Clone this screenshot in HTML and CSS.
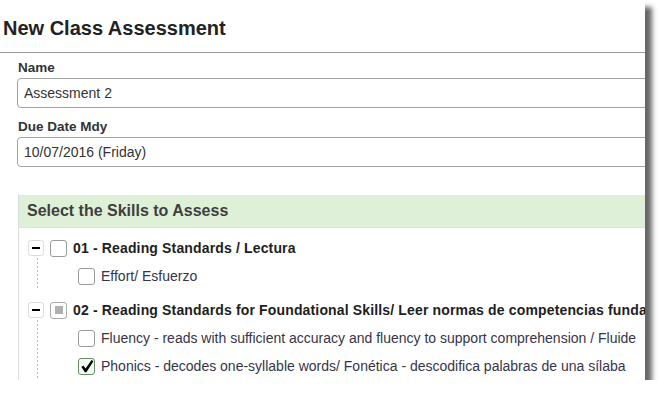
FILE: index.html
```html
<!DOCTYPE html>
<html>
<head>
<meta charset="utf-8">
<link rel="stylesheet" href="styles.css">
</head>
<body>
<div class="window">
  <div class="page">
    <h1 class="title">New Class Assessment</h1>
    <div class="form">
      <label class="label">Name</label>
      <div class="input">Assessment 2</div>
      <label class="label label-gap">Due Date Mdy</label>
      <div class="input">10/07/2016 (Friday)</div>

      <div class="panel">
        <div class="panel-heading">Select the Skills to Assess</div>
        <div class="tree">
          <div class="group">
            <div class="row">
              <span class="toggle"><span class="minus"></span></span>
              <span class="box"></span>
              <span class="group-text">01 - Reading Standards / Lectura</span>
            </div>
            <div class="children">
              <div class="row child">
                <span class="box"></span>
                <span class="child-text">Effort/ Esfuerzo</span>
              </div>
            </div>
          </div>
          <div class="group group-gap">
            <div class="row">
              <span class="toggle"><span class="minus"></span></span>
              <span class="box box-partial"><span class="partial"></span></span>
              <span class="group-text">02 - Reading Standards for Foundational Skills/ Leer normas de competencias funda</span>
            </div>
            <div class="children">
              <div class="row child">
                <span class="box"></span>
                <span class="child-text">Fluency - reads with sufficient accuracy and fluency to support comprehension / Fluide</span>
              </div>
              <div class="row child">
                <span class="box box-checked">
                  <svg width="14" height="14" viewBox="0 0 14 14"><path d="M1.4 8.0 L3.4 6.6 L5.5 9.6 L11.6 0.9 L13.4 2.2 L6.4 13.2 L4.9 13.2 Z" fill="#000"/></svg>
                </span>
                <span class="child-text">Phonics - decodes one-syllable words/ Fonética - descodifica palabras de una sílaba</span>
              </div>
            </div>
          </div>
        </div>
      </div>
    </div>
  </div>
</div>
</body>
</html>
```
FILE: styles.css
```css
html, body {
  margin: 0;
  padding: 0;
  background: #ffffff;
}

body {
  font-family: "Liberation Sans", Arial, sans-serif;
  color: #333;
}

.window {
  width: 645px;
  height: 380px;
  overflow: hidden;
  background: #fff;
  box-shadow: 7px 7px 5px rgba(0, 0, 0, 0.6);
}

.page {
  width: 1000px;
}

.title {
  margin: 0;
  padding: 16px 0 0 3px;
  height: 24px;
  line-height: 24px;
  font-size: 20px;
  font-weight: bold;
  color: #222;
  border-bottom: 1px solid #999;
  padding-bottom: 12px;
  box-sizing: content-box;
}

.form {
  padding-left: 17px;
  display: flex;
  flex-direction: column;
}

.label {
  display: block;
  margin-top: 7px;
  font-size: 13.5px;
  line-height: 16px;
  font-weight: bold;
  color: #333;
  padding-left: 1px;
}

.label-gap {
  margin-top: 11px;
}

.input {
  margin-top: 2px;
  height: 30px;
  box-sizing: border-box;
  border: 1px solid #a3a3a3;
  border-radius: 4px;
  padding: 0 6px;
  font-size: 14px;
  line-height: 28px;
  color: #333;
}

.panel {
  margin-top: 28px;
  margin-left: 1px;
  border-left: 1px solid #dcdcdc;
}

.panel-heading {
  height: 32px;
  line-height: 32px;
  background: #dff0d8;
  border-bottom: 1px solid #d9e6d3;
  padding-left: 8px;
  font-size: 16px;
  font-weight: bold;
  color: #3f3f3f;
}

.tree {
  padding: 6px 0 0 9px;
}

.group-gap {
  margin-top: 6px;
}

.row {
  display: flex;
  align-items: center;
  height: 28px;
  white-space: nowrap;
}

.toggle {
  width: 16px;
  height: 16px;
  box-sizing: border-box;
  border: 1px solid #dedede;
  border-radius: 3px;
  background: #fff;
  display: flex;
  align-items: center;
  justify-content: center;
  margin-right: 6px;
  flex: none;
}

.minus {
  width: 8px;
  height: 2px;
  background: #000;
}

.box {
  width: 17px;
  height: 17px;
  box-sizing: border-box;
  border: 1px solid #9a9a9a;
  border-radius: 3px;
  background: #fff;
  margin-right: 6px;
  flex: none;
  display: flex;
  align-items: center;
  justify-content: center;
}

.box-partial {
  border-color: #ababab;
}

.partial {
  width: 8px;
  height: 8px;
  background: #b0b0b0;
}

.box-checked {
  border-color: #6a8d6a;
  background: #f4f8f2;
}

.group-text {
  font-size: 14px;
  font-weight: bold;
  color: #1e1e1e;
  letter-spacing: 0.15px;
}

.children {
  margin-left: 9px;
  margin-top: -4px;
  padding-top: 4px;
  padding-left: 41px;
  background-image: linear-gradient(#d9a6ae 50%, transparent 50%);
  background-size: 1px 4px;
  background-repeat: repeat-y;
  background-position: 0 0;
}

.child-text {
  font-size: 14px;
  color: #35354a;
}
```
